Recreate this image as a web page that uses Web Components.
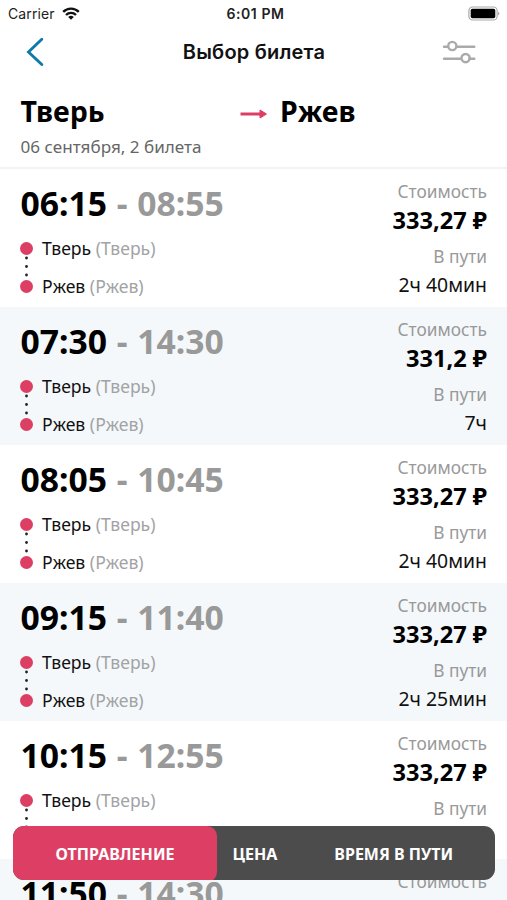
<!DOCTYPE html>
<html lang="ru">
<head>
<meta charset="utf-8">
<title>Выбор билета</title>
<style>
  body {
    margin: 0;
    background: #fff;
    font-family: "Noto Sans", sans-serif;
  }
</style>
</head>
<body>
<tickets-app></tickets-app>

<script>
const define = (name, html, setup) => {
  const template = document.createElement('template')
  template.innerHTML = html

  customElements.define(name,

    class extends HTMLElement {
      constructor () {
        super()
        this.attachShadow({ mode: 'open' }).appendChild(template.content.cloneNode(true))
      }

      connectedCallback () {
        if (setup) setup(this, this.shadowRoot)
      }
    }
  )
}

define('status-bar', `
  <style>
    :host {
      display: grid;
      grid-template-columns: 1fr auto 1fr;
      align-items: center;
      height: 27px;
      padding: 0 7px 0 8px;
      font: 14px/27px Inter, sans-serif;
      color: #222;
    }

    .carrier {
      display: flex;
      align-items: center;
      gap: 7px;
      letter-spacing: .1px;
    }

    .time {
      margin-left: 3px;
      font-size: 14px;
      font-weight: 600;
      letter-spacing: .55px;
    }

    .battery {
      justify-self: end;
    }
  </style>

  <div class="carrier">
    <span>Carrier</span>
    <svg width="18" height="14" viewBox="0 0 18 14" fill="none" stroke="#111" stroke-width="2.4">
      <path d="M1.2 4.9a11 11 0 0 1 15.6 0"/>
      <path d="M4 8a7 7 0 0 1 10 0"/>
      <path d="M9 12.8 6.2 10a4 4 0 0 1 5.6 0z" fill="#111" stroke="none"/>
    </svg>
  </div>
  <span class="time">6:01 PM</span>
  <svg class="battery" width="32" height="16" viewBox="0 0 32 16">
    <rect x=".9" y="1" width="28.2" height="13" rx="3.6" fill="#fff" stroke="#aaa" stroke-width="1.2"/>
    <rect x="2.7" y="2.8" width="24.6" height="9.4" rx="1.8" fill="#000"/>
    <path d="M30.2 5.7c1.6.5 1.6 3.1 0 3.6z" fill="#999"/>
  </svg>
`)

define('nav-bar', `
  <style>
    :host {
      display: grid;
      grid-template-columns: 1fr auto 1fr;
      align-items: center;
      height: 50px;
      padding: 0 31px 0 26px;
      font: 600 20px/50px Inter, sans-serif;
      color: #111;
    }

    .title {
      margin-left: 6px;
      letter-spacing: .2px;
    }

    .filter {
      justify-self: end;
    }
  </style>

  <svg width="18" height="30" viewBox="0 0 18 30" fill="none" stroke="#0d7aa8" stroke-width="2.9" stroke-linecap="round">
    <path d="M15.8 2.3 2.5 15l13.3 12.5"/>
  </svg>
  <span class="title"><slot></slot></span>
  <svg class="filter" width="34" height="24" viewBox="0 0 34 24" fill="none" stroke="#aaa" stroke-width="2.4" stroke-linecap="round">
    <path d="M2 6.7h4M15 6.7h17.3M2 18.7h16.5M27.3 18.7h5"/>
    <circle cx="10.3" cy="6" r="4.1"/>
    <circle cx="23.6" cy="18.1" r="4.1"/>
  </svg>
`)

define('route-header', `
  <style>
    :host {
      display: block;
      box-sizing: border-box;
      height: 92px;
      padding: 13px 20px 0 20.5px;
      border-bottom: 2px solid #f3f3f4;
    }

    .cities {
      display: grid;
      grid-template-columns: 218.5px 41px auto;
      align-items: center;
      font-size: 28.5px;
      font-weight: 700;
      line-height: 42px;
      color: #000;
    }

    svg {
      margin-top: 6px;
    }

    .date {
      font-size: 17.1px;
      line-height: 30px;
      color: #666;
    }
  </style>

  <div class="cities">
    <slot name="from"></slot>
    <svg width="29" height="12" viewBox="0 0 29 12">
      <path d="M1.5 6H23" stroke="#dc3f63" stroke-width="3"/>
      <path d="M21 2 27.5 6 21 10z" fill="#dc3f63" stroke="#dc3f63" stroke-linejoin="round"/>
    </svg>
    <slot name="to"></slot>
  </div>
  <div class="date"><slot name="date"></slot></div>
`)

define('route-stop', `
  <style>
    :host {
      display: flex;
      align-items: center;
      gap: 9px;
      height: 38.2px;
      font-size: 17.6px;
      line-height: 38px;
      white-space: pre;
    }

    i {
      width: 13px;
      height: 13px;
      border-radius: 50%;
      background: #dc3f63;
    }

    .station {
      color: #a2a3a5;
    }
  </style>

  <i></i><span><slot></slot> <span class="station">(<span id="name"></span>)</span></span>
`, (host, root) => {
  root.querySelector('#name').textContent = host.getAttribute('station')
})

define('ticket-row', `
  <style>
    :host {
      display: flex;
      justify-content: space-between;
      box-sizing: border-box;
      height: 138px;
      padding: 12px 20px 0;
      color: #111;
    }

    :host(:nth-of-type(even)) {
      background: #f4f8fb;
    }

    .time {
      margin: 1px 0 4px .5px;
      font-size: 33.7px;
      font-weight: 700;
      line-height: 43px;
      word-spacing: .9px;
      color: #000;
      white-space: nowrap;
    }

    .arrive {
      color: #999;
    }

    .stops {
      position: relative;
    }

    .dots {
      position: absolute;
      left: 5px;
      top: 27px;
    }

    .info {
      padding-top: 1px;
      text-align: right;
      font-size: 17.3px;
    }

    .label {
      line-height: 20px;
      color: #999;
    }

    .price {
      margin-bottom: 8px;
      font-size: 23.6px;
      font-weight: 700;
      line-height: 37px;
      color: #000;
    }

    .duration {
      font-size: 19.4px;
      line-height: 35px;
    }
  </style>

  <div>
    <div class="time"><span id="depart"></span> <span class="arrive">- <span id="arrive"></span></span></div>
    <div class="stops">
      <route-stop station="Тверь">Тверь</route-stop>
      <route-stop station="Ржев">Ржев</route-stop>
      <svg class="dots" width="3" height="22" fill="#222">
        <circle cx="1.5" cy="2" r="1.4"/><circle cx="1.5" cy="10.5" r="1.4"/><circle cx="1.5" cy="19" r="1.4"/>
      </svg>
    </div>
  </div>
  <div class="info">
    <div class="label">Стоимость</div>
    <div class="price"><span id="price"></span> ₽</div>
    <div class="label">В пути</div>
    <div class="duration" id="duration"></div>
  </div>
`, (host, root) => {
  for (const key of ['depart', 'arrive', 'price', 'duration']) {
    root.querySelector('#' + key).textContent = host.getAttribute(key)
  }
})

define('sort-bar', `
  <style>
    :host {
      display: grid;
      grid-template-columns: 204px 76px 1fr;
      height: 54.5px;
      overflow: hidden;
      border-radius: 11px;
      background: #4c4c4c;
      color: #fff;
      font-size: 16px;
      font-weight: 700;
      line-height: 56px;
      text-align: center;
    }

    .active {
      border-radius: 10px;
      background: #dc3f63;
    }
  </style>

  <div class="active">ОТПРАВЛЕНИЕ</div>
  <div>ЦЕНА</div>
  <div>ВРЕМЯ В ПУТИ</div>
`)

define('tickets-app', `
  <style>
    :host {
      display: block;
      position: relative;
      height: 900px;
      overflow: hidden;
      background: #fff;
    }

    sort-bar {
      position: absolute;
      left: 13px;
      right: 12.5px;
      bottom: 20px;
    }
  </style>

  <status-bar></status-bar>
  <nav-bar>Выбор билета</nav-bar>
  <route-header>
    <span slot="from">Тверь</span>
    <span slot="to">Ржев</span>
    <span slot="date">06 сентября, 2 билета</span>
  </route-header>
  <main>
    <ticket-row depart="06:15" arrive="08:55" price="333,27" duration="2ч 40мин"></ticket-row>
    <ticket-row depart="07:30" arrive="14:30" price="331,2" duration="7ч"></ticket-row>
    <ticket-row depart="08:05" arrive="10:45" price="333,27" duration="2ч 40мин"></ticket-row>
    <ticket-row depart="09:15" arrive="11:40" price="333,27" duration="2ч 25мин"></ticket-row>
    <ticket-row depart="10:15" arrive="12:55" price="333,27" duration="2ч 40мин"></ticket-row>
    <ticket-row depart="11:50" arrive="14:30" price="333,27" duration="2ч 40мин"></ticket-row>
  </main>
  <sort-bar></sort-bar>
`)
</script>
</body>
</html>
